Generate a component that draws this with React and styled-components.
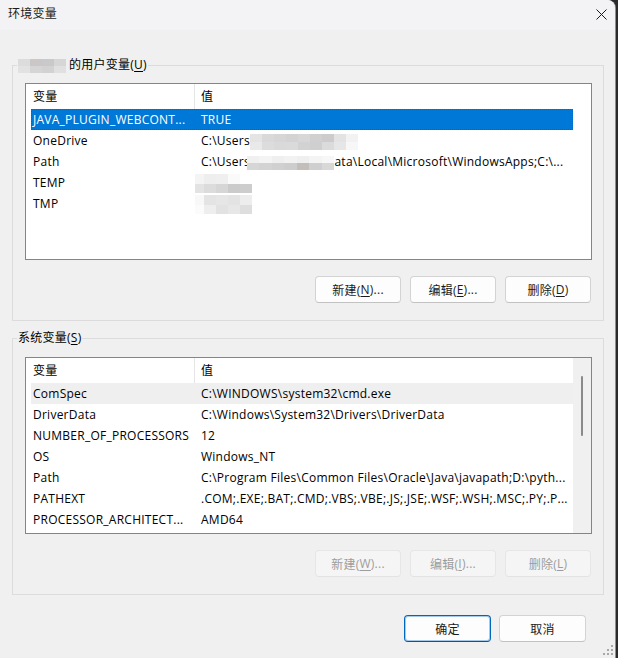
import React from 'react';
import styled, { createGlobalStyle } from 'styled-components';

const GlobalStyle = createGlobalStyle`
  html, body { margin: 0; padding: 0; background: #2b2b2b; }
  body {
    width: 618px; height: 658px; overflow: hidden;
    font-family: "Open Sans", "Noto Sans CJK SC", sans-serif;
  }
  * { box-sizing: border-box; }
`;

const Window = styled.div`
  position: relative;
  width: 615px;
  height: 658px;
  background: #f0f0f0;
  border-top-right-radius: 8px;
  box-shadow: 1px 0 0 #8f8f8f;
  display: flex;
  flex-direction: column;
  font-size: 12px;
  letter-spacing: 0.25px;
  color: #000;
  overflow: hidden;
`;

const TitleBar = styled.div`
  height: 30px;
  flex: none;
  background: #f3f3f5;
  display: flex;
  align-items: center;
  justify-content: space-between;
  padding: 0 0 2px 8px;
`;

const Title = styled.div`
  font-size: 12px;
  line-height: 16px;
  color: #1a1a1a;
`;

const CloseButton = styled.div`
  width: 28px;
  height: 28px;
  display: flex;
  align-items: center;
  justify-content: center;
`;

const Body = styled.div`
  flex: 1;
  display: flex;
  flex-direction: column;
  padding: 0 11px 0 12px;
`;

const Group = styled.fieldset`
  margin: ${p => p.$top}px 0 0;
  border: 1px solid #dcdcdc;
  padding: ${p => p.$pt}px 11px 17px 12px;
  min-width: 0;
`;

const Legend = styled.legend`
  margin-left: -8px;
  padding: 0 1px;
  line-height: 16px;
  white-space: nowrap;
`;

const U = styled.span`
  text-decoration: underline;
  text-underline-offset: 2px;
`;

const MosaicGrid = styled.span`
  display: inline-grid;
  grid-template-columns: repeat(${p => p.$cols}, ${p => p.$cw}px);
  grid-auto-rows: ${p => p.$ch}px;
  vertical-align: middle;
  margin-left: ${p => p.$ml || 0}px;
  margin-right: ${p => p.$mr || 0}px;
`;

const MosaicCell = styled.span`
  background: ${p => p.$c};
`;

function Mosaic({ rows, cw = 12, ch = 8, ml, mr }) {
  return (
    <MosaicGrid $cols={rows[0].length} $cw={cw} $ch={ch} $ml={ml} $mr={mr}>
      {rows.flat().map((c, i) => <MosaicCell key={i} $c={c} />)}
    </MosaicGrid>
  );
}

const ListView = styled.div`
  height: 177px;
  border: 1px solid #858585;
  background: #fff;
  display: flex;
  overflow: hidden;
`;

const ListContent = styled.div`
  flex: 1;
  padding-left: 5px;
  overflow: hidden;
`;

const Header = styled.div`
  display: flex;
  height: 25px;
  width: 542px;
`;

const HeaderCell = styled.div`
  line-height: 26px;
  padding-left: ${p => p.$pad}px;
  width: ${p => (p.$w ? `${p.$w}px` : 'auto')};
  flex: ${p => (p.$w ? 'none' : '1')};
  border-right: ${p => (p.$divider ? '1px solid #e5e5e5' : 'none')};
`;

const Row = styled.div`
  display: flex;
  height: 21px;
  width: 542px;
  background: ${p => (p.$selected ? '#0078d7' : p.$hover ? '#efefef' : 'transparent')};
  color: ${p => (p.$selected ? '#fff' : '#000')};
  outline: ${p => (p.$selected ? '1px dotted #7a4a20' : 'none')};
  outline-offset: -1px;
`;

const Cell = styled.div`
  line-height: 22px;
  white-space: nowrap;
  overflow: hidden;
  padding-left: ${p => p.$pad}px;
  width: ${p => (p.$w ? `${p.$w}px` : 'auto')};
  flex: ${p => (p.$w ? 'none' : '1')};
`;

const ScrollTrack = styled.div`
  width: 18px;
  flex: none;
  background: ${p => (p.$visible ? '#f0f0f0' : '#fff')};
  display: flex;
  justify-content: center;
  padding-top: 18px;
`;

const ScrollThumb = styled.div`
  width: 2px;
  height: 60px;
  border-radius: 1px;
  background: #8a8a8a;
`;

const ButtonRow = styled.div`
  display: flex;
  justify-content: flex-end;
  gap: 9px;
  margin-top: 16px;
  padding-right: 1px;
`;

const Button = styled.div`
  width: ${p => p.$w || 86}px;
  height: 27px;
  display: flex;
  align-items: center;
  justify-content: center;
  border-radius: 4px;
  border: 1px solid ${p => (p.$primary ? '#0067c0' : p.$disabled ? '#e6e6e6' : '#d3d3d3')};
  border-bottom-color: ${p => (p.$primary ? '#0056a8' : p.$disabled ? '#e3e3e3' : '#c2c2c2')};
  box-shadow: ${p => (p.$primary ? 'inset 0 0 0 1px rgba(0,103,192,0.35)' : 'none')};
  background: ${p => (p.$disabled ? '#f5f5f5' : '#fdfdfd')};
  color: ${p => (p.$disabled ? '#9d9d9d' : '#1a1a1a')};
  font-size: 12px;
`;

const Footer = styled.div`
  display: flex;
  justify-content: flex-end;
  gap: 8px;
  margin-top: 20px;
  padding-right: 18px;
`;

const Grip = styled.svg`
  position: absolute;
  right: 1px;
  bottom: 2px;
`;

const C1 = 164;

const userVars = [
  { name: 'JAVA_PLUGIN_WEBCONT...', value: 'TRUE', selected: true },
  {
    name: 'OneDrive',
    value: (
      <>
        C:\Users\
        <Mosaic
          ml={-5}
          cw={12}
          ch={8}
          rows={[
            ['#e4e4e4', '#d9d9d9', '#d6d6d6', '#d3d3d3', '#d7d7d7', '#d0d0d0', '#cdcbcb', '#e3e3e3', '#f2f2f2'],
            ['#e9e9e9', '#dcdcdc', '#d9d9d9', '#dadada', '#d2d2d2', '#cfcfcf', '#dbdbdb', '#e6e6e6', '#f7f7f7'],
          ]}
        />
      </>
    ),
  },
  {
    name: 'Path',
    value: (
      <>
        C:\Users
        <Mosaic
          ml={-3}
          cw={12.5}
          ch={7}
          rows={[
            ['#f0f0f0', '#f4f4f4', '#efefef', '#f2f2f2', '#efefef', '#f4f4f4', '#f7f7f7'],
            ['#d6d6d6', '#d3d3d3', '#d0d0d0', '#cdcdcd', '#c4beba', '#cfcfcf', '#d8d8d8'],
          ]}
        />
        ata\Local\Microsoft\WindowsApps;C:\...
      </>
    ),
  },
  {
    name: 'TEMP',
    value: (
      <Mosaic
        ml={-9}
        cw={12}
        ch={10}
        rows={[
          ['#f4f4f4', '#eeeeee', '#efefef', '#fafafa', '#ffffff'],
          ['#e3e3e3', '#dcdcdc', '#d6d6d6', '#cbcbcb', '#cdcdcd'],
        ]}
      />
    ),
  },
  {
    name: 'TMP',
    value: (
      <Mosaic
        ml={-9}
        cw={12}
        ch={10}
        rows={[
          ['#f8f8f8', '#e4e4e4', '#e6e6e6', '#e3e3e3', '#ededed'],
          ['#fbfbfb', '#eeeeee', '#e2e2e2', '#e7e7e7', '#dedede'],
        ]}
      />
    ),
  },
];

const sysVars = [
  { name: 'ComSpec', value: 'C:\\WINDOWS\\system32\\cmd.exe', hover: true },
  { name: 'DriverData', value: 'C:\\Windows\\System32\\Drivers\\DriverData' },
  { name: 'NUMBER_OF_PROCESSORS', value: '12' },
  { name: 'OS', value: 'Windows_NT' },
  { name: 'Path', value: 'C:\\Program Files\\Common Files\\Oracle\\Java\\javapath;D:\\pyth...' },
  { name: 'PATHEXT', value: '.COM;.EXE;.BAT;.CMD;.VBS;.VBE;.JS;.JSE;.WSF;.WSH;.MSC;.PY;.P...' },
  { name: 'PROCESSOR_ARCHITECT...', value: 'AMD64' },
];

function VarList({ rows, scroll }) {
  return (
    <ListView>
      <ListContent>
        <Header>
          <HeaderCell $w={C1} $pad={2} $divider>变量</HeaderCell>
          <HeaderCell $pad={6}>值</HeaderCell>
        </Header>
        {rows.map((r, i) => (
          <Row key={i} $selected={r.selected} $hover={r.hover}>
            <Cell $w={C1} $pad={2}>{r.name}</Cell>
            <Cell $pad={6}>{r.value}</Cell>
          </Row>
        ))}
      </ListContent>
      <ScrollTrack $visible={scroll}>{scroll && <ScrollThumb />}</ScrollTrack>
    </ListView>
  );
}

export default function App() {
  return (
    <>
      <GlobalStyle />
      <Window>
        <TitleBar>
          <Title>环境变量</Title>
          <CloseButton>
            <svg width="11" height="11" viewBox="0 0 11 11">
              <path d="M0.5 0.5 L10.5 10.5 M10.5 0.5 L0.5 10.5" stroke="#1a1a1a" strokeWidth="1" fill="none" />
            </svg>
          </CloseButton>
        </TitleBar>
        <Body>
          <Group $top={27} $pt={10}>
            <Legend>
              <Mosaic
                cw={12}
                ch={7}
                mr={3}
                rows={[
                  ['#dcdcdc', '#cbc7c7', '#c9c9cc', '#d6d6d6'],
                  ['#e2e2e2', '#d5d5d5', '#d2d2d2', '#e0e0e0'],
                ]}
              />
              的用户变量(<U>U</U>)
            </Legend>
            <VarList rows={userVars} />
            <ButtonRow>
              <Button>新建(<U>N</U>)...</Button>
              <Button>编辑(<U>E</U>)...</Button>
              <Button>删除(<U>D</U>)</Button>
            </ButtonRow>
          </Group>
          <Group $top={9} $pt={11}>
            <Legend>系统变量(<U>S</U>)</Legend>
            <VarList rows={sysVars} scroll />
            <ButtonRow>
              <Button $disabled>新建(<U>W</U>)...</Button>
              <Button $disabled>编辑(<U>I</U>)...</Button>
              <Button $disabled>删除(<U>L</U>)</Button>
            </ButtonRow>
          </Group>
          <Footer>
            <Button $primary $w={87}>确定</Button>
            <Button $w={87}>取消</Button>
          </Footer>
        </Body>
        <Grip width="12" height="12" viewBox="0 0 12 12">
          <g fill="#a8a8a8">
            <rect x="9" y="1" width="2" height="2" />
            <rect x="5" y="5" width="2" height="2" />
            <rect x="9" y="5" width="2" height="2" />
            <rect x="1" y="9" width="2" height="2" />
            <rect x="5" y="9" width="2" height="2" />
            <rect x="9" y="9" width="2" height="2" />
          </g>
        </Grip>
      </Window>
    </>
  );
}
